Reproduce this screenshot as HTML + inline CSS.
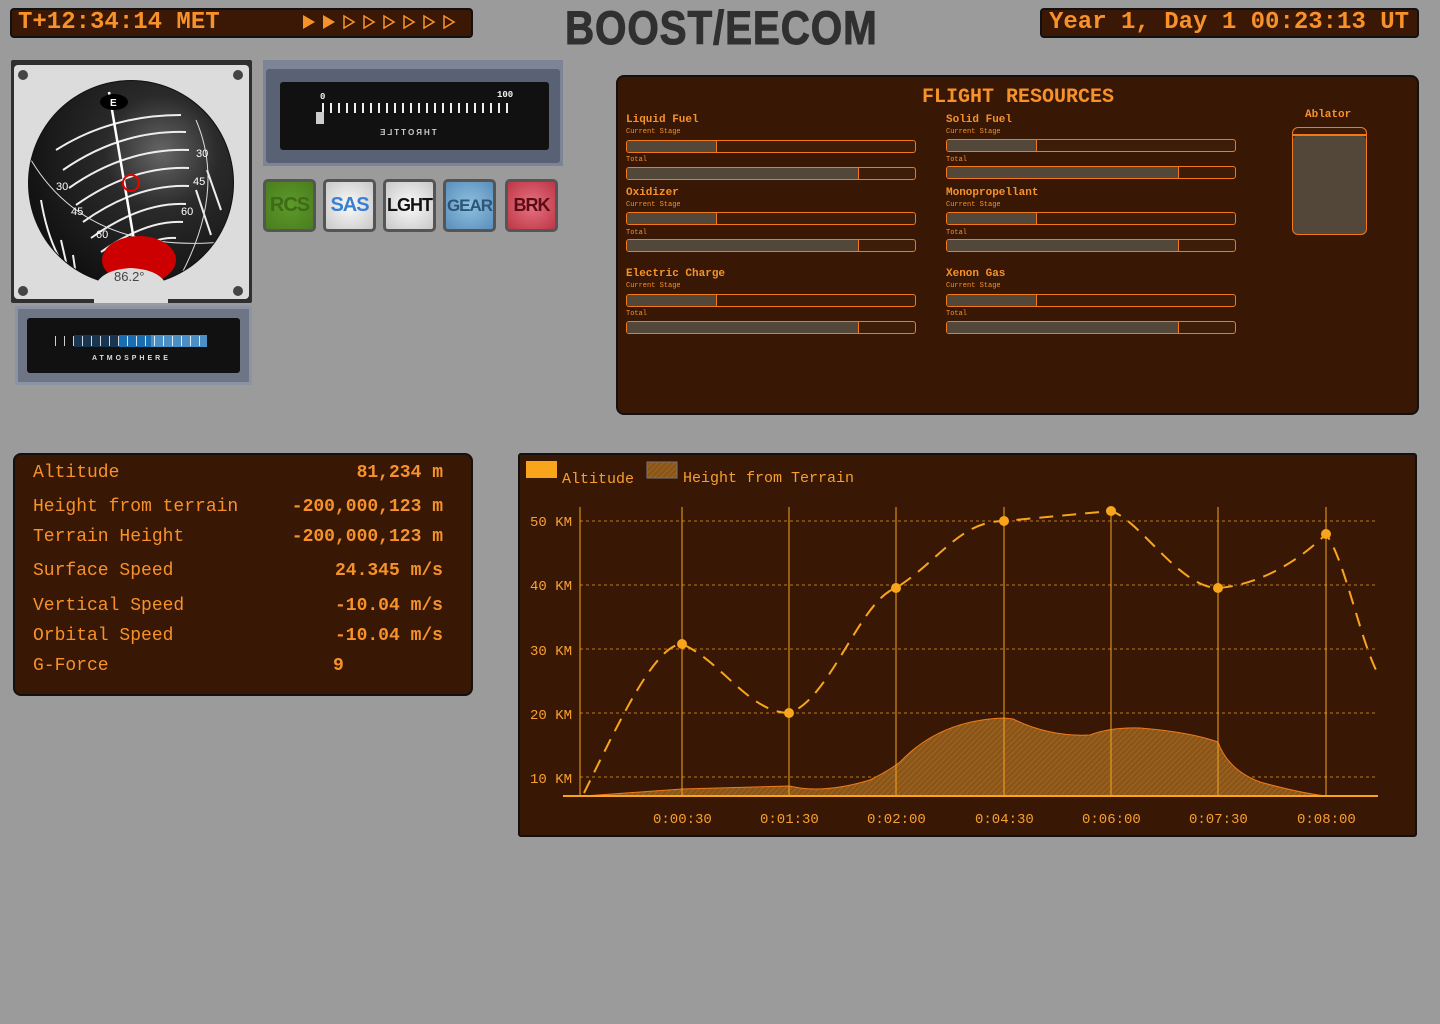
<!DOCTYPE html>
<html><head><meta charset="utf-8"><style>
*{margin:0;padding:0;box-sizing:border-box}
body{width:1440px;height:1024px;background:#9b9b9b;position:relative;overflow:hidden;font-family:"Liberation Mono",monospace;color:#f7922a}
.abs{position:absolute}
.lcd{background:#3a1805;border:2px solid #111;border-radius:4px;color:#f7922a;font-weight:bold;font-size:24px;line-height:26px}
.panel{background:#381705;border:2px solid #111;border-radius:8px}
.bar{position:absolute;height:13px;border:1.5px solid #f07a1a;border-radius:3px;background:#3d1c08;overflow:hidden;width:290px}
.bar i{display:block;height:100%;background:#524739;border-right:1.5px solid #f07a1a}
.rl{position:absolute;font-size:11px;font-weight:bold;color:#f7922a}
.sl{position:absolute;font-size:7px;color:#f7922a}
.btn{position:absolute;top:179px;width:53px;height:53px;border:3px solid #555;border-radius:5px;font-family:"Liberation Sans",sans-serif;font-weight:bold;font-size:20px;text-align:center;line-height:47px;letter-spacing:-1px}
.row{position:absolute;left:33px;width:410px;font-size:18px;display:flex;justify-content:space-between}
.row b{font-weight:bold}
</style></head><body>
<div class="abs lcd" style="left:10px;top:8px;width:463px;height:30px;padding-left:6px">T+12:34:14 MET</div>
<svg class="abs" style="left:0;top:0" width="480" height="40">
<g fill="#f7922a"><path d="M303 15L315 22L303 29Z"/><path d="M323 15L335 22L323 29Z"/></g>
<g fill="none" stroke="#f7922a" stroke-width="1.5"><path d="M344 16L354 22L344 28Z"/><path d="M364 16L374 22L364 28Z"/><path d="M384 16L394 22L384 28Z"/><path d="M404 16L414 22L404 28Z"/><path d="M424 16L434 22L424 28Z"/><path d="M444 16L454 22L444 28Z"/></g>
</svg>
<div class="abs" style="left:565px;top:2px;font-family:'Liberation Sans',sans-serif;font-weight:bold;font-size:47px;color:#303030;line-height:52px;transform:scaleX(0.86);transform-origin:0 0;-webkit-text-stroke:1px #303030;letter-spacing:1px">BOOST/EECOM</div>
<div class="abs lcd" style="left:1040px;top:8px;width:379px;height:30px;padding-left:7px">Year 1, Day 1 00:23:13 UT</div>

<!-- navball -->
<div class="abs" style="left:11px;top:60px;width:241px;height:243px;background:#2f2f2f;border-radius:2px"></div>
<div class="abs" style="left:14px;top:65px;width:235px;height:234px;background:#dcdcdc;border-radius:4px"></div>
<svg class="abs" style="left:11px;top:60px" width="241" height="243" viewBox="0 0 241 243">
<defs><radialGradient id="bg" cx="0.65" cy="0.35" r="0.7"><stop offset="0" stop-color="#666"/><stop offset="0.4" stop-color="#2a2a2a"/><stop offset="1" stop-color="#111"/></radialGradient>
<clipPath id="bc"><circle cx="120" cy="123" r="102"/></clipPath></defs>
<circle cx="12" cy="15" r="5" fill="#444"/><circle cx="227" cy="15" r="5" fill="#444"/><circle cx="12" cy="231" r="5" fill="#444"/><circle cx="227" cy="231" r="5" fill="#444"/>
<circle cx="120" cy="123" r="103" fill="#111"/>
<g clip-path="url(#bc)">
<circle cx="120" cy="123" r="102" fill="url(#bg)"/>
<g stroke="#eee" stroke-width="2" fill="none">
<path d="M45 90 Q100 55 170 55"/><path d="M52 110 Q110 70 175 72"/><path d="M58 128 Q115 88 178 90"/><path d="M65 145 Q120 106 178 108"/><path d="M72 162 Q125 124 178 126"/><path d="M80 178 Q130 142 175 144"/><path d="M90 192 Q135 160 172 162"/><path d="M100 204 Q140 176 165 178"/>
<path d="M30 140 Q40 200 70 225" stroke-width="2"/><path d="M50 180 L58 215"/><path d="M62 195 L66 222"/>
<path d="M185 130 L200 175"/><path d="M196 110 L210 150"/>
</g>
<path d="M20 100 Q80 200 230 180" stroke="#ddd" fill="none" stroke-width="1"/>
<path d="M185 60 Q215 130 170 215" stroke="#ddd" fill="none" stroke-width="1"/>
<path d="M98 32 L128 210" stroke="#fff" stroke-width="2.5"/>
<ellipse cx="128" cy="200" rx="37" ry="24" fill="#c00"/>
</g>
<ellipse cx="103" cy="42" rx="14" ry="8" fill="#000"/><text x="99" y="46" font-size="10" fill="#fff" font-family="Liberation Sans" font-weight="bold">E</text>
<circle cx="120" cy="123" r="8" fill="none" stroke="#e00" stroke-width="2"/>
<g fill="#fff" font-size="11" font-family="Liberation Sans"><text x="185" y="97">30</text><text x="182" y="125">45</text><text x="170" y="155">60</text><text x="45" y="130">30</text><text x="60" y="155">45</text><text x="85" y="178">60</text></g>
<path d="M83 243 L83 232 Q85 210 120 208 Q155 210 157 232 L157 243Z" fill="#dcdcdc"/>
<text x="103" y="221" font-size="13" fill="#444" font-family="Liberation Sans">86.2°</text>
</svg>

<!-- atmosphere -->
<div class="abs" style="left:15px;top:306px;width:237px;height:79px;background:#6e7585;border:3px solid #8b93a4"></div>
<div class="abs" style="left:27px;top:318px;width:213px;height:55px;background:#111;border-radius:3px"></div>
<div class="abs" style="left:74px;top:335px;width:45px;height:12px;background:#1a3550"></div>
<div class="abs" style="left:119px;top:335px;width:32px;height:12px;background:#1a6db0"></div>
<div class="abs" style="left:151px;top:335px;width:56px;height:12px;background:#4b8fc4"></div>
<div class="abs" style="left:55px;top:336px;width:152px;height:14px;background:repeating-linear-gradient(90deg,#fff 0 1px,transparent 1px 9px);opacity:.8;height:10px"></div>
<div class="abs" style="left:92px;top:355px;font-family:'Liberation Sans';font-size:7px;font-weight:bold;color:#ddd;letter-spacing:3px">ATMOSPHERE</div>

<!-- throttle -->
<div class="abs" style="left:263px;top:60px;width:300px;height:106px;background:#7c8496"></div>
<div class="abs" style="left:266px;top:69px;width:294px;height:94px;background:#596275;border-radius:3px"></div>
<div class="abs" style="left:280px;top:82px;width:269px;height:68px;background:#111;border-radius:3px"></div>
<div class="abs" style="left:322px;top:103px;width:190px;height:10px;background:repeating-linear-gradient(90deg,#eee 0 2px,transparent 2px 8px)"></div>
<div class="abs" style="left:320px;top:92px;font-size:9px;color:#eee;font-weight:bold">0</div>
<div class="abs" style="left:497px;top:90px;font-size:9px;color:#eee;font-weight:bold">100</div>
<div class="abs" style="left:316px;top:112px;width:8px;height:12px;background:#ccc"></div>
<div class="abs" style="left:378px;top:128px;font-family:'Liberation Sans';font-size:8px;font-weight:bold;color:#ccc;letter-spacing:2px;transform:scaleX(-1)">THROTTLE</div>

<div class="btn" style="left:263px;background:radial-gradient(#5e9a2a,#4a7d1e);color:#3d6b18">RCS</div>
<div class="btn" style="left:323px;background:radial-gradient(#fafafa,#c8c8c8);color:#3a80d0">SAS</div>
<div class="btn" style="left:383px;background:radial-gradient(#fafafa,#c8c8c8);color:#111;font-size:18px">LGHT</div>
<div class="btn" style="left:443px;background:radial-gradient(#8fc0e0,#5a8fba);color:#2c5578;font-size:17px">GEAR</div>
<div class="btn" style="left:505px;background:radial-gradient(#e87282,#bc3646);color:#5a0d14;font-size:18px">BRK</div>

<!-- resources -->
<div class="abs panel" style="left:616px;top:75px;width:803px;height:340px"></div>
<div class="abs" style="left:922px;top:86px;font-size:20px;font-weight:bold;color:#f7922a">FLIGHT RESOURCES</div>
<div class="rl" style="left:1305px;top:109px">Ablator</div>
<div class="abs" style="left:1292px;top:127px;width:75px;height:108px;border:1.5px solid #f07a1a;border-radius:6px;background:#524739;box-shadow:inset 0 7px 0 #3d1c08"></div>
<div class="abs" style="left:1293px;top:134px;width:73px;height:1.5px;background:#f07a1a"></div>

<div class="rl" style="left:626px;top:114px">Liquid Fuel</div><div class="sl" style="left:626px;top:128px">Current Stage</div>
<div class="bar" style="left:626px;top:140px"><i style="width:90px"></i></div><div class="sl" style="left:626px;top:156px">Total</div>
<div class="bar" style="left:626px;top:167px"><i style="width:232px"></i></div>
<div class="rl" style="left:626px;top:187px">Oxidizer</div><div class="sl" style="left:626px;top:201px">Current Stage</div>
<div class="bar" style="left:626px;top:212px"><i style="width:90px"></i></div><div class="sl" style="left:626px;top:229px">Total</div>
<div class="bar" style="left:626px;top:239px"><i style="width:232px"></i></div>
<div class="rl" style="left:626px;top:268px">Electric Charge</div><div class="sl" style="left:626px;top:282px">Current Stage</div>
<div class="bar" style="left:626px;top:294px"><i style="width:90px"></i></div><div class="sl" style="left:626px;top:310px">Total</div>
<div class="bar" style="left:626px;top:321px"><i style="width:232px"></i></div>

<div class="rl" style="left:946px;top:114px">Solid Fuel</div><div class="sl" style="left:946px;top:128px">Current Stage</div>
<div class="bar" style="left:946px;top:139px"><i style="width:90px"></i></div><div class="sl" style="left:946px;top:156px">Total</div>
<div class="bar" style="left:946px;top:166px"><i style="width:232px"></i></div>
<div class="rl" style="left:946px;top:187px">Monopropellant</div><div class="sl" style="left:946px;top:201px">Current Stage</div>
<div class="bar" style="left:946px;top:212px"><i style="width:90px"></i></div><div class="sl" style="left:946px;top:229px">Total</div>
<div class="bar" style="left:946px;top:239px"><i style="width:232px"></i></div>
<div class="rl" style="left:946px;top:268px">Xenon Gas</div><div class="sl" style="left:946px;top:282px">Current Stage</div>
<div class="bar" style="left:946px;top:294px"><i style="width:90px"></i></div><div class="sl" style="left:946px;top:310px">Total</div>
<div class="bar" style="left:946px;top:321px"><i style="width:232px"></i></div>

<!-- stats -->
<div class="abs panel" style="left:13px;top:453px;width:460px;height:243px"></div>
<div class="row" style="top:463px"><span>Altitude</span><b>81,234 m</b></div>
<div class="row" style="top:497px"><span>Height from terrain</span><b>-200,000,123 m</b></div>
<div class="row" style="top:527px"><span>Terrain Height</span><b>-200,000,123 m</b></div>
<div class="row" style="top:561px"><span>Surface Speed</span><b>24.345 m/s</b></div>
<div class="row" style="top:596px"><span>Vertical Speed</span><b>-10.04 m/s</b></div>
<div class="row" style="top:626px"><span>Orbital Speed</span><b>-10.04 m/s</b></div>
<div class="row" style="top:656px"><span>G-Force</span><b style="position:absolute;left:300px">9</b></div>

<!-- chart -->
<div class="abs panel" style="left:518px;top:453px;width:899px;height:384px;border-radius:3px"></div>
<svg class="abs" style="left:0;top:0" width="1440" height="1024">
<defs><pattern id="h" width="4" height="4" patternUnits="userSpaceOnUse" patternTransform="rotate(45)"><rect width="4" height="4" fill="#8a5518"/><rect width="1" height="4" fill="#a06520"/></pattern></defs>
<rect x="526" y="461" width="31" height="17" fill="#f8a51c"/>
<rect x="647" y="462" width="30" height="16" fill="url(#h)" stroke="#777"/>
<g font-family="Liberation Mono" font-size="15" fill="#f7a030">
<text x="562" y="483">Altitude</text><text x="683" y="482">Height from Terrain</text>
<g font-size="14"><text x="530" y="526">50 KM</text><text x="530" y="590">40 KM</text><text x="530" y="655">30 KM</text><text x="530" y="719">20 KM</text><text x="530" y="783">10 KM</text>
<text x="653" y="823">0:00:30</text><text x="760" y="823">0:01:30</text><text x="867" y="823">0:02:00</text><text x="975" y="823">0:04:30</text><text x="1082" y="823">0:06:00</text><text x="1189" y="823">0:07:30</text><text x="1297" y="823">0:08:00</text></g></g>
<g stroke="#c07a20" stroke-dasharray="3,3" stroke-width="1"><path d="M580 521H1378M580 585H1378M580 649H1378M580 713H1378M580 777H1378"/></g>
<path d="M584 796 L682 789 L789 786 L800 788 Q830 792 870 780 Q890 770 900 762 Q940 720 1004 718 L1013 719 Q1050 737 1090 735 Q1111 727 1140 728 Q1190 732 1218 742 Q1228 770 1260 782 Q1300 793 1326 796Z" fill="url(#h)" stroke="#f07a1a" stroke-width="1"/>
<g stroke="#f8a51c" stroke-width="1"><path d="M580 507V796M682 507V796M789 507V796M896 507V796M1004 507V796M1111 507V796M1218 507V796M1326 507V796"/></g>
<path d="M563 796H1378" stroke="#f8a51c" stroke-width="2"/>
<path d="M584 793 C620 720 655 645 682 644 C720 660 750 713 789 713 C830 700 860 600 896 588 C940 560 960 521 1004 521 L1111 511 C1140 520 1180 588 1218 588 C1260 585 1300 560 1326 534 C1345 560 1360 640 1378 674" fill="none" stroke="#f8a51c" stroke-width="2" stroke-dasharray="14,9"/>
<g fill="#f8a51c"><circle cx="682" cy="644" r="5"/><circle cx="789" cy="713" r="5"/><circle cx="896" cy="588" r="5"/><circle cx="1004" cy="521" r="5"/><circle cx="1111" cy="511" r="5"/><circle cx="1218" cy="588" r="5"/><circle cx="1326" cy="534" r="5"/></g>
</svg>
</body></html>
